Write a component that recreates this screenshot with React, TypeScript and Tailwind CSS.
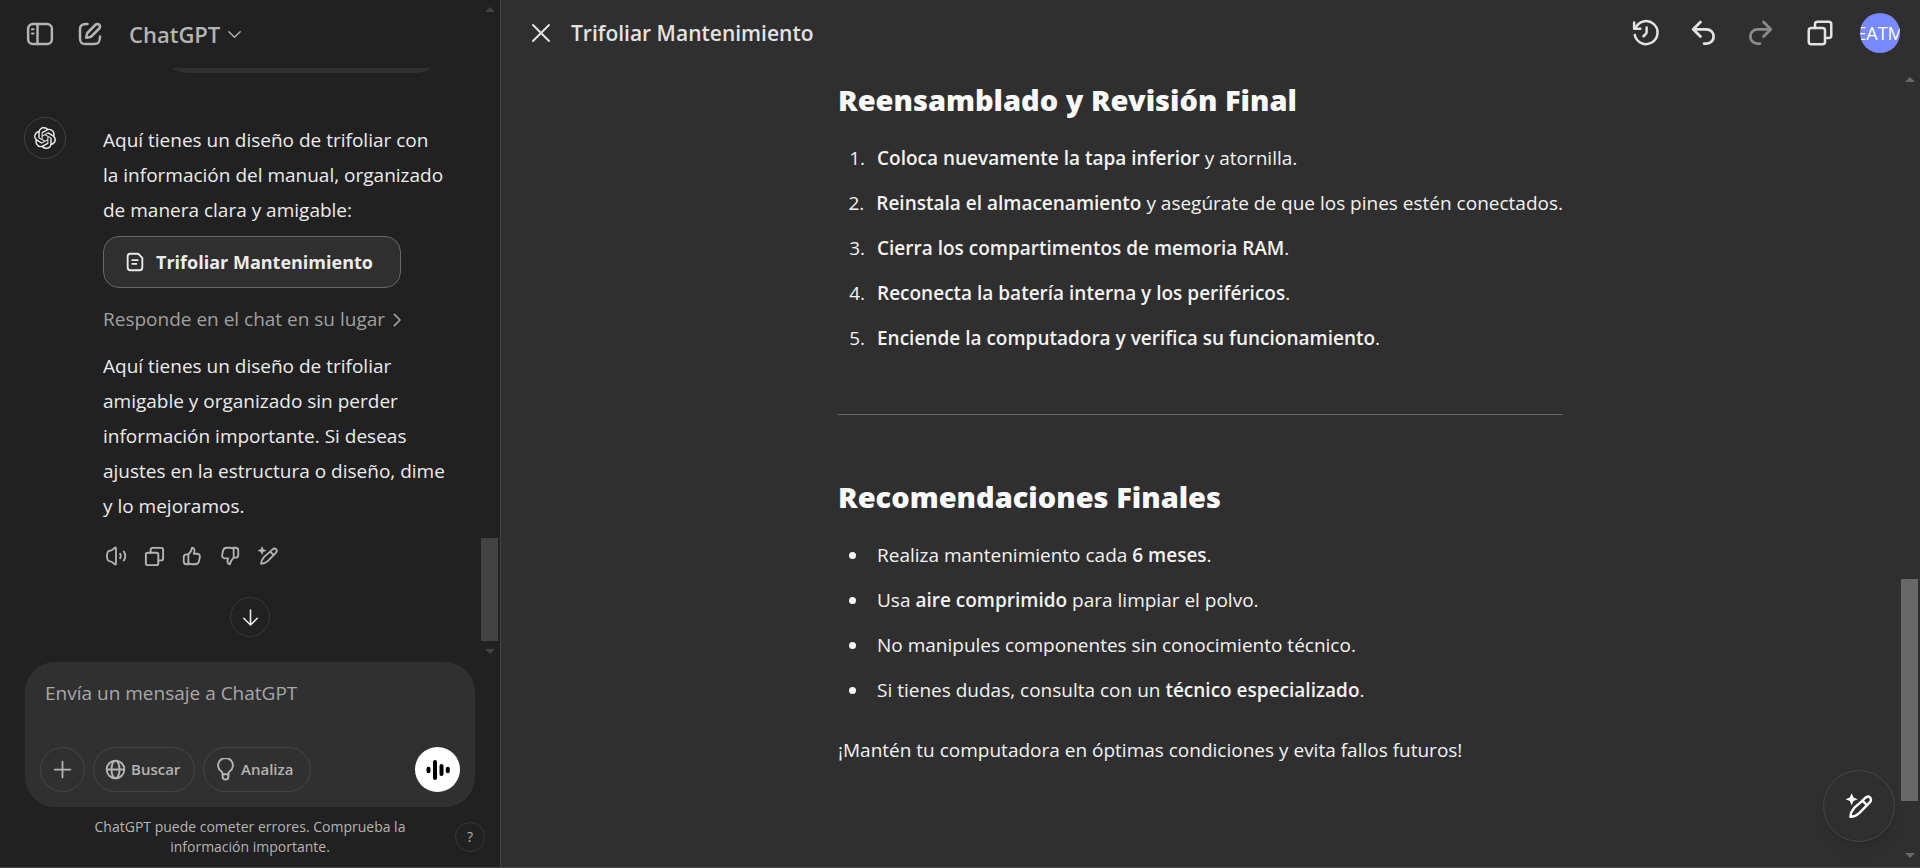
import React from "react";
import { SiOpenai } from "react-icons/si";

const stroke = {
  fill: "none",
  stroke: "currentColor",
  strokeWidth: 2,
  strokeLinecap: "round" as const,
  strokeLinejoin: "round" as const,
  viewBox: "0 0 24 24",
  "aria-hidden": true,
};

type IconProps = { className?: string };

const SidebarIcon = ({ className }: IconProps) => (
  <svg {...stroke} className={className}>
    <rect x="2.5" y="4" width="19" height="16" rx="3.800" />
    <path d="M10 4v16" />
    <path d="M5.600 8.200h1.200M5.600 11.600h1.200" strokeWidth="1.700" />
  </svg>
);

const EditIcon = ({ className }: IconProps) => (
  <svg {...stroke} className={className}>
    <path d="M10 4C6 4 4 4.600 4 8.600v6.800C4 19 5.400 20 8.600 20h6.800c3.800 0 4.600-2 4.600-6" />
    <path d="M16.400 4.600a2.120 2.120 0 0 1 3 3l-6 6c-.7.7-1.400 1-2.300 1.100L9 15l.3-2.100c.1-.9.4-1.600 1.100-2.300z" />
  </svg>
);

const ChevronDown = ({ className }: IconProps) => (
  <svg {...stroke} className={className}>
    <path d="m4 8 8 8 8-8" />
  </svg>
);

const ChevronRight = ({ className }: IconProps) => (
  <svg {...stroke} strokeWidth={2.5} className={className}>
    <path d="m8 3.500 8.500 8.500L8 20.500" />
  </svg>
);

const DocIcon = ({ className }: IconProps) => (
  <svg {...stroke} className={className}>
    <path d="M7 3h8.500L20 7.500V18a3 3 0 0 1-3 3H7a3 3 0 0 1-3-3V6a3 3 0 0 1 3-3z" />
    <path d="M9 10h6M9 14h4.500" />
  </svg>
);

const SpeakerIcon = ({ className }: IconProps) => (
  <svg {...stroke} className={className}>
    <path d="M12 3.500v17c0 .8-.8 1-1.300.6C9 19.500 7.500 17.500 4.500 17.500c-1.300 0-1.600-.8-2-2.500-.5-1.800-.5-4.200 0-6 .4-1.700.7-2.500 2-2.500 3 0 4.500-2 6.200-3.600.5-.4 1.300-.2 1.300.6z" />
    <path d="M16.500 9.500c.8 1.500.8 3.500 0 5M20.500 7c1.900 3 1.900 7 0 10" />
  </svg>
);

const CopyIcon = ({ className }: IconProps) => (
  <svg {...stroke} className={className}>
    <rect x="3" y="8" width="13" height="13" rx="2" />
    <path d="M8 8V5a2 2 0 0 1 2-2h9a2 2 0 0 1 2 2v9a2 2 0 0 1-2 2h-3" />
  </svg>
);

const ThumbIcon = ({ className }: IconProps) => (
  <svg {...stroke} className={className}>
    <path d="M12.100 3c-.4 2.900-1.900 5-4.100 7.200V19.500c1 1 2.500 1.500 4 1.500h3.500c2 0 3.400-1 4-3l1-4.500c.6-2.200-.8-4-3-4H14c.6-1.600 1-3 .6-4.500-.3-1.200-1.200-1.900-2.500-2z" />
    <path d="M8 10.200H6a3 3 0 0 0-3 3V18a3 3 0 0 0 3 3h2.500" />
  </svg>
);

const MagicPencil = ({ className }: IconProps) => (
  <svg {...stroke} className={className}>
    <path d="M14 7.500 17 4.700c1.300-1.200 2.900-1 3.800-.1s1 2.600-.1 3.800L12 17.300c-1.900 1.800-4.600 3.200-7.500 3.200C4.500 17.500 6 15 7.800 13z" />
    <path d="m14.300 7.200 3.900 3.700" />
    <path
      d="M5.500 1 7 4.500 10.500 6 7 7.500 5.500 11 4 7.500.5 6 4 4.500z"
      fill="currentColor"
      stroke="none"
    />
  </svg>
);

const ArrowDown = ({ className }: IconProps) => (
  <svg {...stroke} className={className}>
    <path d="M12 2.500v19M3.500 13l8.500 8.500 8.500-8.500" />
  </svg>
);

const PlusIcon = ({ className }: IconProps) => (
  <svg {...stroke} className={className}>
    <path d="M12 3v18M3 12h18" />
  </svg>
);

const GlobeIcon = ({ className }: IconProps) => (
  <svg {...stroke} className={className}>
    <circle cx="12" cy="12" r="9.200" />
    <ellipse cx="12" cy="12" rx="4.200" ry="9.200" />
    <path d="M3 12h18" />
  </svg>
);

const BulbIcon = ({ className }: IconProps) => (
  <svg {...stroke} className={className}>
    <path d="M9 17.500v-1.300c0-.8-.4-1.400-1-1.900a7.700 7.700 0 1 1 8 0c-.6.500-1 1.100-1 1.900v1.300" />
    <path d="M9 17h6v2.500a3 3 0 0 1-6 0z" />
  </svg>
);

const VoiceIcon = ({ className }: IconProps) => (
  <svg {...stroke} strokeWidth={4} className={className}>
    <path d="M2.500 10.700v2.600M9 4v16M15.500 8v8M21.800 10.700v2.600" />
  </svg>
);

const CloseIcon = ({ className }: IconProps) => (
  <svg {...stroke} className={className}>
    <path d="m4 4 16 16M20 4 4 20" />
  </svg>
);

const HistoryIcon = ({ className }: IconProps) => (
  <svg {...stroke} className={className}>
    <path d="M3.500 8.200A9.200 9.200 0 1 1 3 13.500" />
    <path d="M2.500 3.500v5h5" />
    <path d="M12.500 7.500v3.200c0 1-.3 1.700-1 2.400l-1.500 1.500" />
  </svg>
);

const UndoIcon = ({ className }: IconProps) => (
  <svg {...stroke} strokeWidth={2.3} className={className}>
    <path d="M9.500 2.500 3.500 8.500l6 6" />
    <path d="M4 8.500h10.500a5.900 5.900 0 0 1 0 11.800H12.500" />
  </svg>
);

const Triangle = ({ down = false, className = "" }: { down?: boolean; className?: string }) => (
  <svg viewBox="0 0 10 5" className={`h-[5px] w-[10px] ${className}`} aria-hidden="true">
    <path d={down ? "M0 0h10L5 5z" : "M0 5h10L5 0z"} fill="currentColor" />
  </svg>
);

const feedback = [
  { label: "Leer en voz alta", icon: <SpeakerIcon className="size-[22px]" /> },
  { label: "Copiar", icon: <CopyIcon className="size-[23px]" /> },
  { label: "Buena respuesta", icon: <ThumbIcon className="size-[22px]" /> },
  { label: "Mala respuesta", icon: <ThumbIcon className="size-[22px] rotate-180" /> },
  { label: "Editar en lienzo", icon: <MagicPencil className="size-[22px]" /> },
];

const steps = [
  { strong: "Coloca nuevamente la tapa inferior", rest: " y atornilla." },
  {
    strong: "Reinstala el almacenamiento",
    rest: " y asegúrate de que los pines estén conectados.",
  },
  { strong: "Cierra los compartimentos de memoria RAM", rest: "." },
  { strong: "Reconecta la batería interna y los periféricos", rest: "." },
  { strong: "Enciende la computadora y verifica su funcionamiento", rest: "." },
];

const tips = [
  { before: "Realiza mantenimiento cada ", strong: "6 meses", after: "." },
  { before: "Usa ", strong: "aire comprimido", after: " para limpiar el polvo." },
  { before: "No manipules componentes sin conocimiento técnico.", strong: "", after: "" },
  { before: "Si tienes dudas, consulta con un ", strong: "técnico especializado", after: "." },
];

function ChatPanel() {
  return (
    <aside className="flex w-[501px] shrink-0 flex-col border-r border-[#424242] bg-[#212121]">
      <div className="flex min-h-0 flex-1">
        <div className="flex min-w-0 flex-1 flex-col">
          <header className="flex h-[68px] shrink-0 items-center pl-[25px] text-[#b4b4b4]">
            <button aria-label="Abrir barra lateral">
              <SidebarIcon className="size-[30px]" />
            </button>
            <button aria-label="Nuevo chat" className="ml-5">
              <EditIcon className="size-[30px]" />
            </button>
            <button className="ml-6 flex items-center gap-[6px] text-[22px] leading-7 font-semibold">
              ChatGPT
              <ChevronDown className="size-[17px]" />
            </button>
          </header>
          <div className="flex flex-1 flex-col overflow-hidden">
            <div className="mr-9 ml-[158px] h-[5px] overflow-hidden">
              <div className="-mt-[55px] h-[60px] rounded-[30px] bg-[#303030]" />
            </div>
            <div className="mt-11 flex pl-6">
              <div className="flex size-[42px] shrink-0 items-center justify-center rounded-full border border-[#424242] text-[#ececec]">
                <SiOpenai className="size-[22px]" />
              </div>
              <div className="ml-[37px] w-[345px] pt-[6px] text-[19px] leading-[35px] text-[#ececec]">
                <p>
                  Aquí tienes un diseño de trifoliar con la información del manual, organizado de
                  manera clara y amigable:
                </p>
                <button className="mt-2 flex h-[52px] w-[298px] items-center gap-[10px] rounded-2xl border border-[#676767] bg-[#2f2f2f] pl-5 text-lg font-bold">
                  <DocIcon className="size-[22px]" />
                  Trifoliar Mantenimiento
                </button>
                <button className="mt-[14px] flex items-center gap-1 text-[#a0a0a0]">
                  Responde en el chat en su lugar
                  <ChevronRight className="size-4" />
                </button>
                <p className="mt-3">
                  Aquí tienes un diseño de trifoliar amigable y organizado sin perder información
                  importante. Si deseas ajustes en la estructura o diseño, dime y lo mejoramos.
                </p>
                <div className="mt-[17px] -ml-[2px] flex gap-2 text-[#b4b4b4]">
                  {feedback.map((f) => (
                    <button
                      key={f.label}
                      aria-label={f.label}
                      className="flex h-[30px] w-[30px] items-center justify-center"
                    >
                      {f.icon}
                    </button>
                  ))}
                </div>
              </div>
            </div>
            <button
              aria-label="Bajar"
              className="mt-[26px] ml-[230px] flex size-10 shrink-0 items-center justify-center rounded-full border border-[#383838] text-[#ececec]"
            >
              <ArrowDown className="size-[19px]" />
            </button>
          </div>
        </div>
        <div className="flex w-[17px] shrink-0 flex-col items-center pt-[7px] pb-1 text-[#424242]">
          <Triangle />
          <div className="mt-auto h-[103px] w-[17px] bg-[#424242]" />
          <Triangle down className="mt-2" />
        </div>
        <div className="w-[2px]" />
      </div>
      <form className="mx-[25px] mt-1 flex h-[145px] shrink-0 flex-col rounded-[30px] bg-[#303030] px-[15px] pt-4 pb-[15px]">
        <textarea
          aria-label="Envía un mensaje a ChatGPT"
          placeholder="Envía un mensaje a ChatGPT"
          className="block min-h-0 flex-1 resize-none bg-transparent px-[5px] text-[19px] leading-[30px] outline-none placeholder:text-[#a8a8a8]"
        />
        <div className="flex h-[45px] items-center gap-2 text-[15px] font-semibold text-[#b4b4b4]">
          <button
            type="button"
            aria-label="Adjuntar"
            className="flex size-[45px] items-center justify-center rounded-full border border-[#454545]"
          >
            <PlusIcon className="size-[21px]" />
          </button>
          <button
            type="button"
            className="flex h-full w-[102px] items-center gap-1 rounded-full border border-[#454545] pl-[10px]"
          >
            <GlobeIcon className="size-[23px]" />
            Buscar
          </button>
          <button
            type="button"
            className="flex h-full w-[108px] items-center gap-1 rounded-full border border-[#454545] pl-[10px]"
          >
            <BulbIcon className="size-[23px]" />
            Analiza
          </button>
          <button
            type="button"
            aria-label="Modo de voz"
            className="ml-auto flex size-[45px] items-center justify-center rounded-full bg-white text-black"
          >
            <VoiceIcon className="size-6" />
          </button>
        </div>
      </form>
      <footer className="flex h-[60px] shrink-0 items-center justify-between px-[15px]">
        <span className="w-[30px]" />
        <p className="w-[330px] text-center text-sm leading-5 text-[#b4b4b4]">
          ChatGPT puede cometer errores. Comprueba la información importante.
        </p>
        <button
          aria-label="Ayuda"
          className="flex size-[30px] items-center justify-center rounded-full border border-[#383838] text-sm text-[#b4b4b4]"
        >
          ?
        </button>
      </footer>
    </aside>
  );
}

function DocumentPanel() {
  return (
    <main className="relative flex min-w-0 flex-1 flex-col bg-[#2f2f2f] text-[#f3f3f3]">
      <header className="flex h-[66px] shrink-0 items-center pr-5 pl-7 text-[#e3e3e3]">
        <button aria-label="Cerrar">
          <CloseIcon className="size-6" />
        </button>
        <h1 className="ml-[18px] text-[21px] leading-7 font-semibold">Trifoliar Mantenimiento</h1>
        <div className="ml-auto flex items-center gap-7">
          <button aria-label="Historial">
            <HistoryIcon className="size-[30px]" />
          </button>
          <button aria-label="Deshacer">
            <UndoIcon className="size-[29px]" />
          </button>
          <button aria-label="Rehacer" className="text-[#8b8b8b]">
            <UndoIcon className="size-[29px] -scale-x-100" />
          </button>
          <button aria-label="Copiar" className="ml-[2px]">
            <CopyIcon className="size-[30px]" />
          </button>
          <button className="-ml-[3px] flex size-10 items-center justify-center overflow-hidden rounded-full bg-[#7989ff] text-lg text-white">
            <span className="shrink-0">EATM</span>
          </button>
        </div>
      </header>
      <div className="flex min-h-0 flex-1">
        <article className="ml-[337px] w-[725px] text-[19px] leading-[35px]">
          <h2 className="mt-4 font-['Noto_Sans',sans-serif] text-[29px] leading-[35px] font-black text-[#f9f9f9]">
            Reensamblado y Revisión Final
          </h2>
          <ol className="mt-6 flex flex-col gap-[10px]">
            {steps.map((step, i) => (
              <li key={step.strong} className="flex whitespace-nowrap">
                <span className="w-[39px] pr-3 text-right">{i + 1}.</span>
                <span>
                  <strong className="font-semibold">{step.strong}</strong>
                  {step.rest}
                </span>
              </li>
            ))}
          </ol>
          <hr className="mt-[58px] border-[#676767]" />
          <h2 className="mt-16 font-['Noto_Sans',sans-serif] text-[29px] leading-[35px] font-black text-[#f9f9f9]">
            Recomendaciones Finales
          </h2>
          <ul className="mt-6 flex flex-col gap-[10px]">
            {tips.map((tip) => (
              <li key={tip.before} className="flex items-center">
                <span className="mr-[21px] ml-[11px] size-[7px] rounded-full bg-[#f9f9f9]" />
                <span>
                  {tip.before}
                  <strong className="font-semibold">{tip.strong}</strong>
                  {tip.after}
                </span>
              </li>
            ))}
          </ul>
          <p className="mt-[25px]">
            ¡Mantén tu computadora en óptimas condiciones y evita fallos futuros!
          </p>
        </article>
        <div className="mr-[2px] ml-auto flex w-[17px] flex-col items-center pt-[11px] pb-[9px] text-[#686868]">
          <Triangle />
          <div className="mt-auto h-[222px] w-[17px] bg-[#686868]" />
          <Triangle down className="mt-[52px]" />
        </div>
      </div>
      <button
        aria-label="Sugerir ediciones"
        className="absolute right-[25px] bottom-[25px] flex size-[72px] items-center justify-center rounded-full border border-[#454545] bg-[#2f2f2f] text-white shadow-lg shadow-black/10"
      >
        <MagicPencil className="size-[29px]" />
      </button>
    </main>
  );
}

export default function App() {
  return (
    <div className="flex h-screen border-b border-[#484848] bg-[#212121] font-['Open_Sans','Noto_Sans',sans-serif]">
      <ChatPanel />
      <DocumentPanel />
    </div>
  );
}
